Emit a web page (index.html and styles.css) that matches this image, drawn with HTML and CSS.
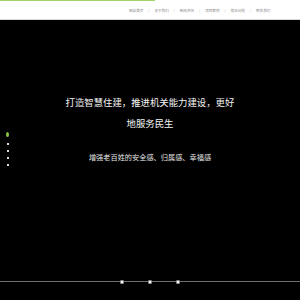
FILE: index.html
```html
<!DOCTYPE html>
<html lang="zh-CN">
<head>
    <meta charset="UTF-8">
    <meta name="viewport" content="width=device-width, initial-scale=1.0">
    <title>打造智慧住建</title>
    <link rel="stylesheet" href="styles.css">
</head>
<body>
    <div class="topo">
        <div class="barra-verde"></div>
        <nav class="menu">
            <a href="#">网站首页</a>
            <span class="sep">/</span>
            <a href="#">关于我们</a>
            <span class="sep">/</span>
            <a href="#">新闻资讯</a>
            <span class="sep">/</span>
            <a href="#">项目案例</a>
            <span class="sep">/</span>
            <a href="#">常见问题</a>
            <span class="sep">/</span>
            <a href="#">联系我们</a>
        </nav>
    </div>

    <div class="banner">
        <div class="paginas">
            <span class="pag ativo"></span>
            <span class="pag"></span>
            <span class="pag"></span>
            <span class="pag"></span>
            <span class="pag"></span>
        </div>

        <h1 class="titulo">打造智慧住建，推进机关能力建设，更好地服务民生</h1>
        <p class="subtitulo">增强老百姓的安全感、归属感、幸福感</p>

        <div class="linha">
            <span class="ponto"></span>
            <span class="ponto"></span>
            <span class="ponto"></span>
        </div>
    </div>
</body>
</html>
```

FILE: styles.css
```css
body {
    margin: 0;
    background-color: #000;
    font-family: "Noto Sans CJK SC", "Noto Sans", sans-serif;
}

.topo {
    position: relative;
    height: 19px;
    background-color: #fff;
    border-bottom: 1px solid #d8d8d8;
    display: flex;
    align-items: center;
    padding-left: 129px;
}

.barra-verde {
    position: absolute;
    top: 0;
    left: 0;
    width: 155px;
    height: 1px;
    background-color: #a6d46a;
}

.menu {
    display: flex;
    align-items: center;
    gap: 4.8px;
    font-size: 3.6px;
    line-height: 5px;
    margin-top: 1px;
}

.menu a {
    color: #8a8a8a;
    text-decoration: none;
}

.sep {
    color: #b5b5b5;
}

.banner {
    position: relative;
    height: 280px;
    padding-top: 72px;
    box-sizing: border-box;
    text-align: center;
}

.titulo {
    width: 176px;
    margin: 0 auto;
    color: #f4f4f4;
    font-size: 9.4px;
    font-weight: normal;
    line-height: 21px;
}

.subtitulo {
    margin: 18px 0 0;
    color: #e6e6e6;
    font-size: 7.2px;
    line-height: 10px;
}

.paginas {
    position: absolute;
    left: 6px;
    top: 112px;
    width: 3px;
    display: flex;
    flex-direction: column;
    align-items: center;
    gap: 5px;
}

.pag {
    width: 2px;
    height: 2px;
    background-color: #ddd;
}

.pag.ativo {
    width: 3px;
    height: 5px;
    border-radius: 50%;
    background-color: #8cc63f;
    margin-bottom: 1px;
}

.linha {
    position: absolute;
    left: 0;
    right: 0;
    bottom: 18px;
    height: 1px;
    background-color: #6e6e6e;
    display: flex;
    justify-content: center;
    align-items: center;
    gap: 24px;
}

.ponto {
    width: 2px;
    height: 2px;
    background-color: #fff;
    border: 1px solid #888;
    border-radius: 1px;
}
```
